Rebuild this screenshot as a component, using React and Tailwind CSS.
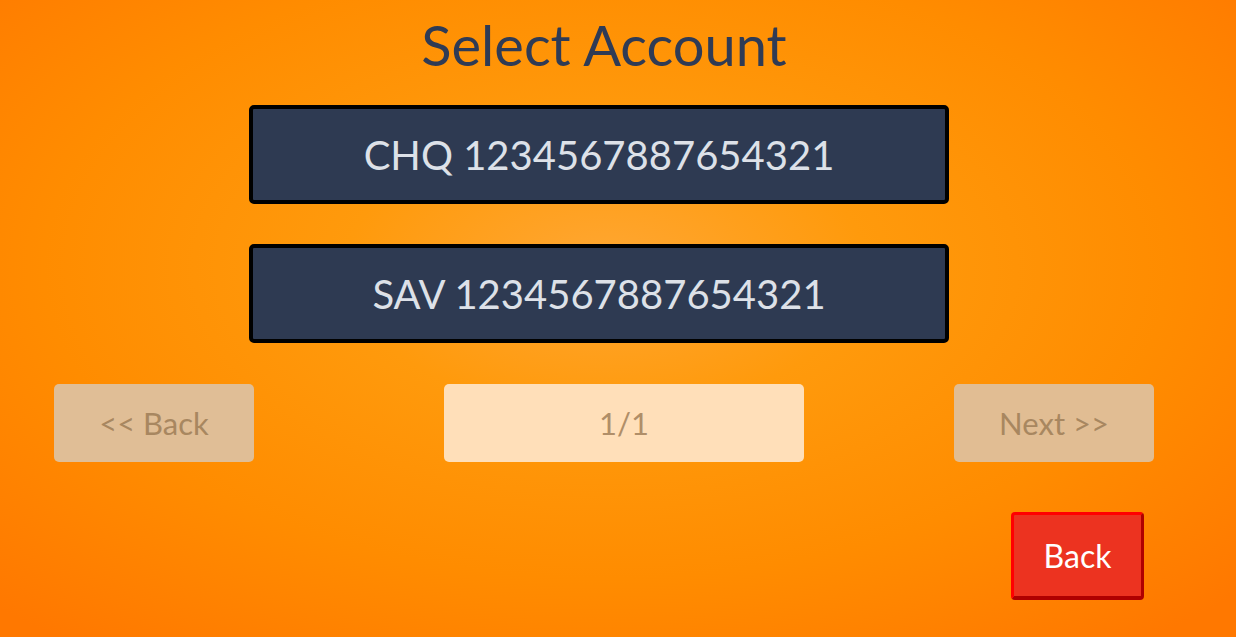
export default function App() {
  const font = { fontFamily: "Lato, 'Open Sans', sans-serif" };
  return (
    <div
      style={font}
      className="w-[1236px] h-[637px] overflow-hidden flex flex-col bg-[radial-gradient(ellipse_70%_75%_at_49%_42%,#ffa733_0%,#ff9a0c_30%,#ff8c00_65%,#ff7800_100%)]"
    >
      <h1 className="mt-[11px] h-[67px] leading-[67px] text-[56px] text-[#2f3b55] text-center w-[1208px] font-normal">
        Select Account
      </h1>
      <div className="mt-[27px] ml-[249px] w-[700px] flex flex-col gap-[40px]">
        <div className="h-[99px] border-4 border-black rounded-[5px] bg-[#2e3a52] flex items-center justify-center text-[40px] text-[#dde1e8]">
          CHQ 1234567887654321
        </div>
        <div className="h-[99px] border-4 border-black rounded-[5px] bg-[#2e3a52] flex items-center justify-center text-[40px] text-[#dde1e8]">
          SAV 1234567887654321
        </div>
      </div>
      <div className="mt-[41px] pl-[54px] flex">
        <div className="w-[200px] h-[78px] rounded-[5px] bg-[#e0be96] flex items-center justify-center text-[31px] text-[#a88760]">
          &lt;&lt; Back
        </div>
        <div className="ml-[190px] w-[360px] h-[78px] rounded-[5px] bg-[#ffdfb9] flex items-center justify-center text-[31px] text-[#b08e68]">
          1/1
        </div>
        <div className="ml-[150px] w-[200px] h-[78px] rounded-[5px] bg-[#e1bd93] flex items-center justify-center text-[31px] text-[#a88760]">
          Next &gt;&gt;
        </div>
      </div>
      <div className="mt-[50px] pl-[1011px] flex">
        <div className="w-[133px] h-[88px] rounded-[4px] border-[3px] border-b-[4px] border-t-[#ff0000] border-l-[#ff0000] border-b-[#b00000] border-r-[#b00000] bg-[#ec3320] flex items-center justify-center text-[32px] text-white">
          Back
        </div>
      </div>
    </div>
  );
}
